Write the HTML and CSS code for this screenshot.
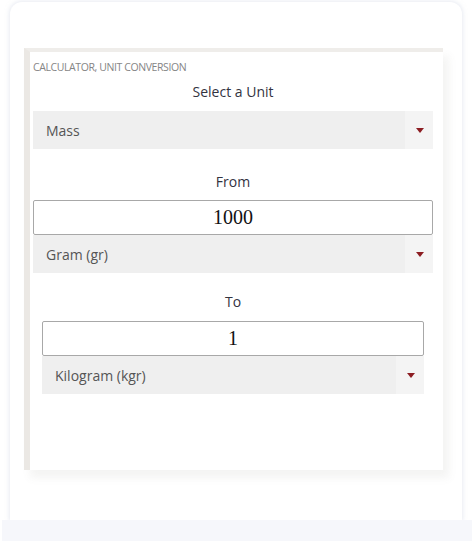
FILE: index.html
```html
<!DOCTYPE html>
<html lang="en">
<head>
	<meta charset="UTF-8">
	<title>Unit Conversion</title>
	<link rel="stylesheet" href="styles.css">
</head>
<body>
	<!-- device frame -->
	<div class="device">
		<!-- calculator panel -->
		<section class="calc">
			<p class="calc-tit">CALCULATOR, UNIT CONVERSION</p>

			<h2 class="label">Select a Unit</h2>
			<div class="select">
				<select>
					<option>Mass</option>
				</select>
				<span class="arrow"><i></i></span>
			</div>

			<h2 class="label label-from">From</h2>
			<input class="num" type="text" value="1000">
			<div class="select">
				<select>
					<option>Gram (gr)</option>
				</select>
				<span class="arrow"><i></i></span>
			</div>

			<!-- to : a bit narrower -->
			<div class="to">
				<h2 class="label label-to">To</h2>
				<input class="num" type="text" value="1">
				<div class="select">
					<select>
						<option>Kilogram (kgr)</option>
					</select>
					<span class="arrow"><i></i></span>
				</div>
			</div>
		</section>
	</div>
	<div class="foot"></div>
</body>
</html>
```

FILE: styles.css
```css
html,body,h2,p{
	margin: 0;
	padding: 0;
}
body{
	background-color: #fff;
	font-family: 'Open Sans', 'Liberation Sans', sans-serif;
}

/* device frame */
.device{
	height: 518px;
	margin: 2px 12px 0 10px;
	padding: 46px 0 0 14px;
	border-radius: 12px 12px 0 0;
	box-shadow: 0 0 4px 1px rgba(214,219,232,.55);
	box-sizing: border-box;
}
.foot{
	height: 21px;
	margin: 0 2px;
	background-color: #f6f7fb;
}

/* panel */
.calc{
	width: 400px;
	height: 410px;
	padding: 8px 10px 0 3px;
	border-left: 6px solid #ebe8e4;
	border-top: 4px solid #efedea;
	background-color: #fff;
	box-shadow: 6px 8px 8px rgba(120,110,100,.08);
}
.calc-tit{
	font-size: 10.5px;
	line-height: 14px;
	letter-spacing: -0.4px;
	color: #858585;
}

/* labels */
.label{
	margin: 8px 0 9px;
	font-size: 14px;
	font-weight: normal;
	line-height: 20px;
	text-align: center;
	color: #33333f;
}
.label-from{
	margin: 23px 0 8px;
}
.label-to{
	margin: 19px 0 9px;
}

/* select box */
.select{
	display: flex;
	height: 38px;
	background-color: #efefef;
}
.select select{
	flex: 1;
	padding: 0 0 0 13px;
	border: 0;
	background: transparent;
	font-family: 'Open Sans', 'Liberation Sans', sans-serif;
	font-size: 14px;
	color: #555;
	-webkit-appearance: none;
	appearance: none;
	outline: none;
}
.arrow{
	display: flex;
	align-items: center;
	justify-content: center;
	width: 28px;
	padding-left: 2px;
	box-sizing: border-box;
	background-color: #f4f4f4;
}
.arrow i{
	width: 0;
	height: 0;
	border-left: 4px solid transparent;
	border-right: 4px solid transparent;
	border-top: 5px solid #8c1d22;
}

/* number input */
.num{
	display: block;
	width: 100%;
	height: 35px;
	box-sizing: border-box;
	border: 1px solid #a8a8a8;
	border-radius: 2px;
	font-family: 'Liberation Serif', serif;
	font-size: 20px;
	text-align: center;
	color: #111;
	outline: none;
}

/* to block */
.to{
	padding: 0 9px;
}
```
